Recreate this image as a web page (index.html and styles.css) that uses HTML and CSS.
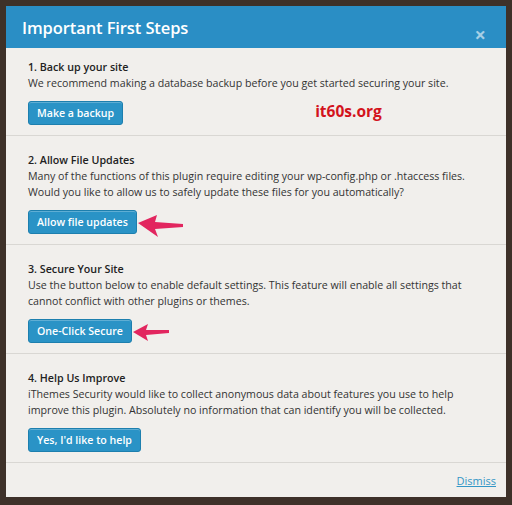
FILE: index.html
```html
<!DOCTYPE html>
<html>
<head>
<meta charset="utf-8">
<link rel="stylesheet" href="styles.css">
</head>
<body>
<div class="modal">
  <div class="modal-header">
    <h1 class="modal-title">Important First Steps</h1>
    <span class="close">×</span>
  </div>
  <div class="modal-body">
    <div class="step step-first">
      <h2 class="step-title">1. Back up your site</h2>
      <p class="step-text">We recommend making a database backup before you get started securing your site.</p>
      <div class="step-actions">
        <button class="btn">Make a backup</button>
        <span class="watermark">it60s.org</span>
      </div>
    </div>
    <div class="step">
      <h2 class="step-title">2. Allow File Updates</h2>
      <p class="step-text">Many of the functions of this plugin require editing your wp-config.php or .htaccess files.<br>Would you like to allow us to safely update these files for you automatically?</p>
      <div class="step-actions">
        <button class="btn">Allow file updates</button>
        <svg class="arrow arrow-long" width="46" height="24" viewBox="0 0 46 24">
          <path d="M0 9 L19 1 L17 8 L45 10 L45 13 L17 15 L20 23 Z" fill="#e2265f"/>
        </svg>
      </div>
    </div>
    <div class="step">
      <h2 class="step-title">3. Secure Your Site</h2>
      <p class="step-text">Use the button below to enable default settings. This feature will enable all settings that<br>cannot conflict with other plugins or themes.</p>
      <div class="step-actions">
        <button class="btn">One-Click Secure</button>
        <svg class="arrow arrow-short" width="37" height="20" viewBox="0 0 37 20">
          <path d="M0 10 L15 2 L13 8 L36 8 L36 11 L13 13 L15 19 Z" fill="#e2265f"/>
        </svg>
      </div>
    </div>
    <div class="step">
      <h2 class="step-title">4. Help Us Improve</h2>
      <p class="step-text">iThemes Security would like to collect anonymous data about features you use to help<br>improve this plugin. Absolutely no information that can identify you will be collected.</p>
      <div class="step-actions">
        <button class="btn">Yes, I'd like to help</button>
      </div>
    </div>
  </div>
  <div class="modal-footer">
    <a class="dismiss" href="#">Dismiss</a>
  </div>
</div>
</body>
</html>
```
FILE: styles.css
```css
html, body {
  margin: 0;
  padding: 0;
}
body {
  width: 512px;
  height: 505px;
  background: #3e3129;
  font-family: "Open Sans", "Liberation Sans", sans-serif;
  padding: 6px;
  box-sizing: border-box;
  overflow: hidden;
}
.modal {
  width: 500px;
  height: 491px;
  background: #f1efec;
  display: flex;
  flex-direction: column;
}
.modal-header {
  height: 42px;
  background: #2a8ec5;
  display: flex;
  align-items: center;
  justify-content: space-between;
  padding: 0 20px 0 16px;
  box-sizing: border-box;
  flex-shrink: 0;
}
.modal-title {
  margin: 0;
  color: #ffffff;
  font-size: 16.5px;
  font-weight: 600;
  letter-spacing: -0.1px;
}
.close {
  color: #a6cfe6;
  font-size: 20px;
  font-weight: 700;
  position: relative;
  top: 7px;
}
.step {
  padding: 16px 22px 10px;
  border-bottom: 1px solid #d9d7d3;
}
.step-first {
  padding-top: 11px;
}
.step-title {
  margin: 0;
  font-size: 10.7px;
  line-height: 16px;
  font-weight: 600;
  color: #222;
}
.step-text {
  margin: 0;
  font-size: 10.65px;
  line-height: 16px;
  color: #333;
}
.step-actions {
  margin-top: 10px;
  display: flex;
  align-items: center;
  height: 24px;
}
.btn {
  height: 24px;
  padding: 0 8px;
  background: #2a93c6;
  border: 1px solid #1d7fae;
  border-radius: 3px;
  color: #ffffff;
  font-family: "Open Sans", "Liberation Sans", sans-serif;
  font-size: 10.6px;
  font-weight: 600;
  box-shadow: inset 0 1px 0 rgba(255,255,255,0.25);
}
.watermark {
  margin-left: 192px;
  margin-top: -5px;
  color: #d3131c;
  font-size: 15.5px;
  font-weight: 700;
}
.arrow-long {
  margin-left: 1px;
  margin-top: 8px;
}
.arrow-short {
  margin-left: 1px;
  margin-top: 2px;
}
.modal-footer {
  flex: 1;
  display: flex;
  align-items: center;
  justify-content: flex-end;
  padding-right: 10px;
}
.dismiss {
  color: #3396c6;
  font-size: 11px;
  text-decoration: underline;
}
```
